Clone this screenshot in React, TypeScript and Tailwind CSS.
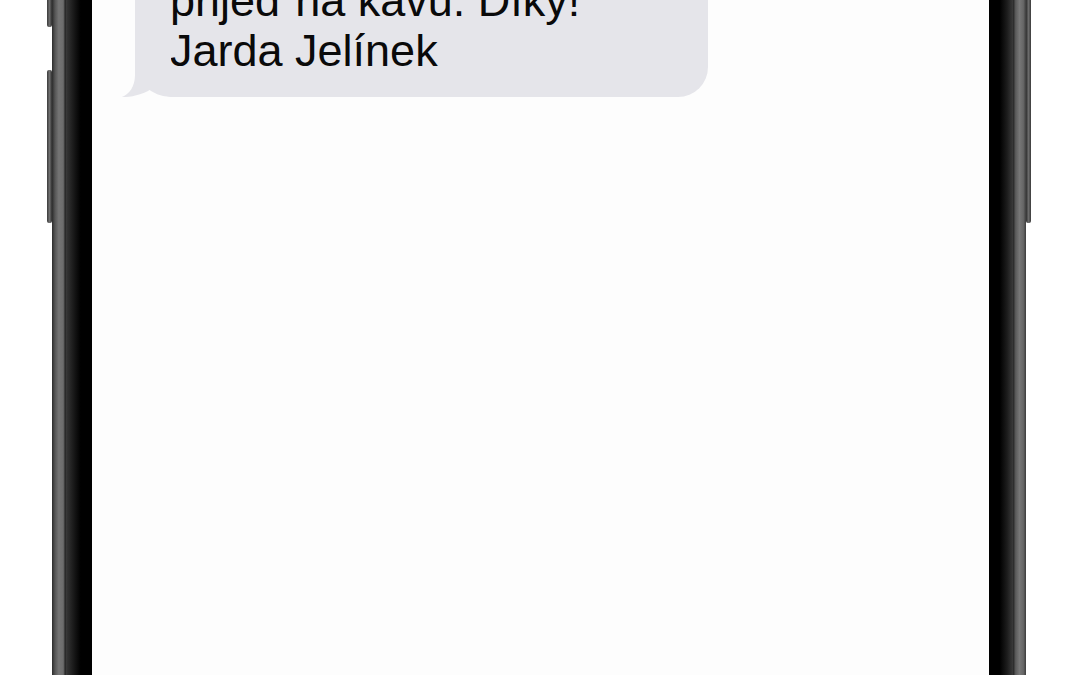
import React from 'react';

const lines = ['přijeď na kávu. Díky!', 'Jarda Jelínek'];

const BubbleTail = () => (
    <svg
        className="absolute left-[-14px] bottom-0"
        width="50"
        height="42"
        viewBox="0 0 50 42"
    >
        <path
            d="M14 0 V20 C14 32 8 39 1 42 C10 42.5 24 39 32 33 C38 37 44 41 50 42 V0 Z"
            fill="#e5e5ea"
        />
    </svg>
);

const SideButtons = ({ side }: { side: 'left' | 'right' }) => (
    <div className="w-[5px] shrink-0 h-full flex flex-col">
        {side === 'left' ? (
            <>
                <div className="h-[27px] rounded-b-[2px] bg-[linear-gradient(to_right,#3a3a3a,#6b6b6b_50%,#2e2e2e)]" />
                <div className="h-[43px]" />
                <div className="h-[153px] rounded-[2px] bg-[linear-gradient(to_right,#3a3a3a,#707070_50%,#2e2e2e)]" />
            </>
        ) : (
            <div className="h-[223px] rounded-b-[2px] bg-[linear-gradient(to_right,#2e2e2e,#6b6b6b_50%,#3a3a3a)]" />
        )}
    </div>
);

export default function App() {
    return (
        <div className="w-[1080px] h-[675px] overflow-hidden bg-white flex">
            <div className="w-[47px] shrink-0" />
            <SideButtons side="left" />
            {/* left rim + bezel */}
            <div className="w-[15px] shrink-0 bg-[linear-gradient(to_right,#2c2c2c,#555_20%,#747474_45%,#6c6c6c_75%,#262626_88%,#3e3e3e)]" />
            <div className="w-[25px] shrink-0 bg-[linear-gradient(to_right,#333,#161616_30%,#000_55%,#000)]" />

            <div className="w-[897px] shrink-0 bg-[#fdfdfd] flex flex-col">
                <div className="relative ml-[43px] mt-[-48px] w-[573px] bg-[#e5e5ea] rounded-[30px] rounded-bl-[36px] pt-[24px] pb-[21px] pl-[35px] pr-6">
                    <div className="font-['Liberation_Sans',Arial,sans-serif] text-[45px] leading-[50px] text-[#0a0a0a] whitespace-nowrap">
                        {lines.map((l, i) => (
                            <div key={i}>{l}</div>
                        ))}
                    </div>
                    <BubbleTail />
                </div>
            </div>

            {/* right bezel + rim */}
            <div className="w-[24px] shrink-0 bg-[linear-gradient(to_right,#000,#000_45%,#1c1c1c_75%,#3a3a3a)]" />
            <div className="w-[13px] shrink-0 bg-[linear-gradient(to_right,#222,#5a5a5a_20%,#777_50%,#666_80%,#3c3c3c)]" />
            <SideButtons side="right" />
            <div className="flex-1" />
        </div>
    );
}
